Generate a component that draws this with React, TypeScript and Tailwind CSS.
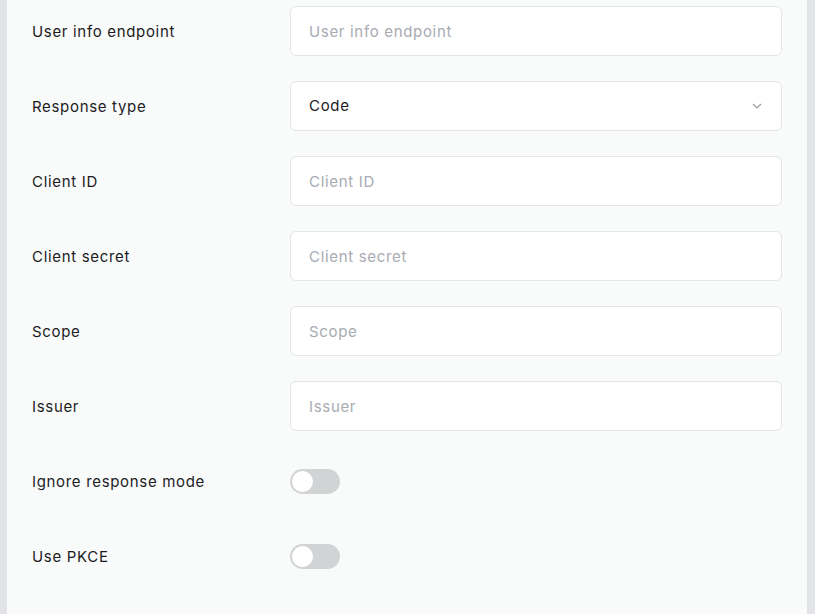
import React from "react";

type Field = { label: string; kind: "text" | "select" | "toggle"; value?: string };

const fields: Field[] = [
  { label: "User info endpoint", kind: "text" },
  { label: "Response type", kind: "select", value: "Code" },
  { label: "Client ID", kind: "text" },
  { label: "Client secret", kind: "text" },
  { label: "Scope", kind: "text" },
  { label: "Issuer", kind: "text" },
  { label: "Ignore response mode", kind: "toggle" },
  { label: "Use PKCE", kind: "toggle" },
];

const Toggle: React.FC = () => (
  <button
    type="button"
    className="relative h-[25px] w-[50px] rounded-full bg-[#d2d3d5]"
  >
    <span className="absolute left-[1px] top-[1px] h-[23px] w-[23px] rounded-full border border-[#cfd0d2] bg-white" />
  </button>
);

export default function App() {
  return (
    <div className="flex h-[614px] w-[815px] bg-[#e3e4e8] font-['Inter',sans-serif] text-[15px] tracking-[0.045em] text-[#1c1c1f]">
      <div className="ml-[7px] flex w-[800px] flex-col gap-[25px] bg-[#f9fafa] pl-[25px] pr-[25px] pt-[6px]">
        {fields.map((f) => (
          <div key={f.label} className="flex h-[50px] items-center">
            <label className="w-[258px] shrink-0 pt-[2px]">{f.label}</label>
            {f.kind === "text" && (
              <input
                placeholder={f.label}
                className="h-[50px] flex-1 rounded-[6px] border border-[#e4e5e7] bg-white px-[18px] text-[15px] tracking-[0.045em] outline-none placeholder:text-[#a8abb2]"
              />
            )}
            {f.kind === "select" && (
              <div className="flex h-[50px] flex-1 items-center justify-between rounded-[6px] border border-[#e4e5e7] bg-white pl-[18px] pr-[19px]">
                <span>{f.value}</span>
                <svg width="10" height="6" viewBox="0 0 10 6" fill="none">
                  <path d="M1 1l4 4 4-4" stroke="#9a9ca3" strokeWidth="1.2" />
                </svg>
              </div>
            )}
            {f.kind === "toggle" && <Toggle />}
          </div>
        ))}
      </div>
    </div>
  );
}
